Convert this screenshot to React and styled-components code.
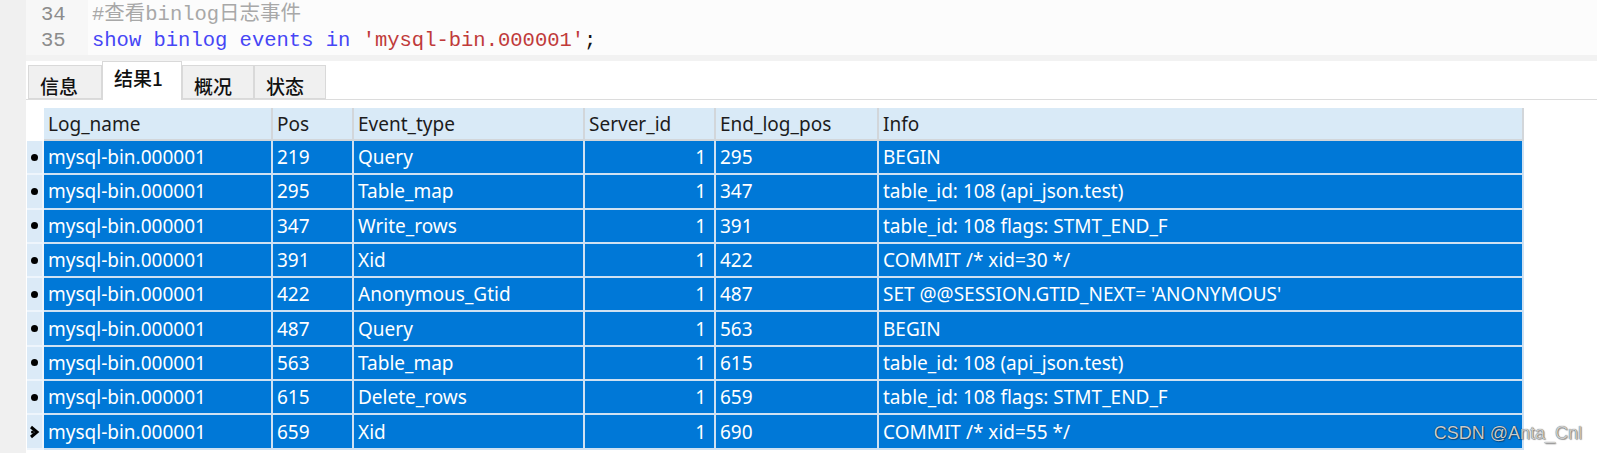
import React from "react";
import styled, { createGlobalStyle } from "styled-components";

const Global = createGlobalStyle`
  html, body { margin: 0; padding: 0; background: #ffffff; }
  body { font-family: "Noto Sans", "Noto Sans CJK SC", sans-serif; }
`;

const Page = styled.div`
  position: relative;
  display: flex;
  width: 1597px;
  height: 453px;
  overflow: hidden;
  background: #ffffff;
`;

const SideStrip = styled.div`
  width: 26px;
  flex: none;
  background: #f0f0f0;
`;

const Main = styled.div`
  flex: 1;
  display: flex;
  flex-direction: column;
  min-width: 0;
`;

const Editor = styled.div`
  display: flex;
  height: 55px;
  flex: none;
  font-family: "Liberation Mono", "Noto Sans CJK SC", monospace;
  font-size: 20.5px;
`;

const Gutter = styled.div`
  width: 62px;
  flex: none;
  background: #f7f7f7;
  padding: 2px 0 0 15px;
  box-sizing: border-box;
  color: #8c8c8c;
`;

const CodeBody = styled.div`
  flex: 1;
  background: #fcfcfc;
  padding: 2px 0 0 4px;
`;

const Line = styled.div`
  height: 26px;
  line-height: 26px;
  white-space: pre;
`;

const Tok = styled.span`
  color: ${(p) => p.$c};
`;

const Splitter = styled.div`
  height: 6px;
  flex: none;
  background: #f2f2f2;
`;

const TabBar = styled.div`
  display: flex;
  align-items: flex-end;
  height: 38px;
  padding-left: 2px;
  border-bottom: 1px solid #dcdcdc;
  flex: none;
`;

const Tab = styled.div`
  width: ${(p) => p.$w}px;
  height: ${(p) => (p.$active ? 39 : 34)}px;
  box-sizing: border-box;
  margin-bottom: ${(p) => (p.$active ? -1 : 0)}px;
  padding: ${(p) => (p.$active ? "4px" : "8px")} 0 0 11px;
  background: ${(p) => (p.$active ? "#ffffff" : "#f0f0f0")};
  border: 1px solid #d9d9d9;
  border-bottom: ${(p) => (p.$active ? "none" : "1px solid #d9d9d9")};
  font-family: "Noto Sans CJK SC", sans-serif;
  font-weight: 500;
  font-size: 19px;
  line-height: 24px;
  color: #111111;
`;

const Grid = styled.div`
  display: grid;
  grid-template-columns: 17px 229px 81px 231px 131px 163px 645px;
  grid-template-rows: 33px;
  grid-auto-rows: 34.3px;
  margin: 8px 0 0 1px;
  width: 1497px;
  font-family: "Noto Sans", "Noto Sans CJK SC", sans-serif;
  font-size: 19px;
`;

const Corner = styled.div`
  background: #ffffff;
`;

const HeadCell = styled.div`
  box-sizing: border-box;
  background: #d9eaf7;
  border-right: 2px solid #d2d6da;
  border-bottom: 2px solid #d2d6da;
  color: #1c1c1c;
  padding-left: 4px;
  display: flex;
  align-items: center;
  white-space: nowrap;
  overflow: hidden;
`;

const Marker = styled.div`
  box-sizing: border-box;
  background: #dbeaf7;
  border-right: 2px solid #eef5fc;
  border-bottom: 2px solid #eef5fc;
  display: flex;
  align-items: center;
  justify-content: center;
`;

const Dot = styled.span`
  width: 7px;
  height: 7px;
  border-radius: 50%;
  background: #000000;
`;

const Cell = styled.div`
  box-sizing: border-box;
  background: #0078d7;
  color: #ffffff;
  border-right: 2px solid #cfe1f2;
  border-bottom: 2px solid #cfe1f2;
  padding: 0 ${(p) => (p.$right ? "8px" : "0")} 0 ${(p) => (p.$right ? "0" : "4px")};
  display: flex;
  align-items: center;
  justify-content: ${(p) => (p.$right ? "flex-end" : "flex-start")};
  white-space: nowrap;
  overflow: hidden;
`;

const Watermark = styled.div`
  position: absolute;
  right: 15px;
  bottom: 9px;
  font-family: "Liberation Sans", Arial, sans-serif;
  font-size: 18px;
  line-height: 22px;
  color: rgba(215, 215, 215, 0.95);
  text-shadow: 0 0 1px rgba(0, 0, 0, 0.75), 1px 1px 1px rgba(0, 0, 0, 0.35);
`;

const heads = ["Log_name", "Pos", "Event_type", "Server_id", "End_log_pos", "Info"];

const rows = [
  ["219", "Query", "295", "BEGIN"],
  ["295", "Table_map", "347", "table_id: 108 (api_json.test)"],
  ["347", "Write_rows", "391", "table_id: 108 flags: STMT_END_F"],
  ["391", "Xid", "422", "COMMIT /* xid=30 */"],
  ["422", "Anonymous_Gtid", "487", "SET @@SESSION.GTID_NEXT= 'ANONYMOUS'"],
  ["487", "Query", "563", "BEGIN"],
  ["563", "Table_map", "615", "table_id: 108 (api_json.test)"],
  ["615", "Delete_rows", "659", "table_id: 108 flags: STMT_END_F"],
  ["659", "Xid", "690", "COMMIT /* xid=55 */"],
];

const tabs = [
  { label: "信息", w: 74 },
  { label: "结果1", w: 80, active: true },
  { label: "概况", w: 72 },
  { label: "状态", w: 72 },
];

const Arrow = () => (
  <svg width="11" height="14" viewBox="0 0 11 14">
    <polyline points="2,2 8,7 2,12" fill="none" stroke="#000" strokeWidth="3" strokeLinejoin="miter" />
    <circle cx="3.5" cy="7" r="1.5" fill="#000" />
  </svg>
);

export default function App() {
  return (
    <>
      <Global />
      <Page>
        <SideStrip />
        <Main>
          <Editor>
            <Gutter>
              <Line>34</Line>
              <Line>35</Line>
            </Gutter>
            <CodeBody>
              <Line>
                <Tok $c="#a8a8a8">#查看binlog日志事件</Tok>
              </Line>
              <Line>
                <Tok $c="#4646f5">show binlog events in </Tok>
                <Tok $c="#c03a3a">'mysql-bin.000001'</Tok>
                <Tok $c="#111">;</Tok>
              </Line>
            </CodeBody>
          </Editor>
          <Splitter />
          <TabBar>
            {tabs.map((t) => (
              <Tab key={t.label} $w={t.w} $active={t.active}>
                {t.label}
              </Tab>
            ))}
          </TabBar>
          <Grid>
            <Corner />
            {heads.map((h) => (
              <HeadCell key={h}>{h}</HeadCell>
            ))}
            {rows.map((r, i) => (
              <React.Fragment key={i}>
                <Marker>{i === rows.length - 1 ? <Arrow /> : <Dot />}</Marker>
                <Cell>mysql-bin.000001</Cell>
                <Cell>{r[0]}</Cell>
                <Cell>{r[1]}</Cell>
                <Cell $right>1</Cell>
                <Cell>{r[2]}</Cell>
                <Cell>{r[3]}</Cell>
              </React.Fragment>
            ))}
          </Grid>
        </Main>
        <Watermark>CSDN @Anta_Cnl</Watermark>
      </Page>
    </>
  );
}
